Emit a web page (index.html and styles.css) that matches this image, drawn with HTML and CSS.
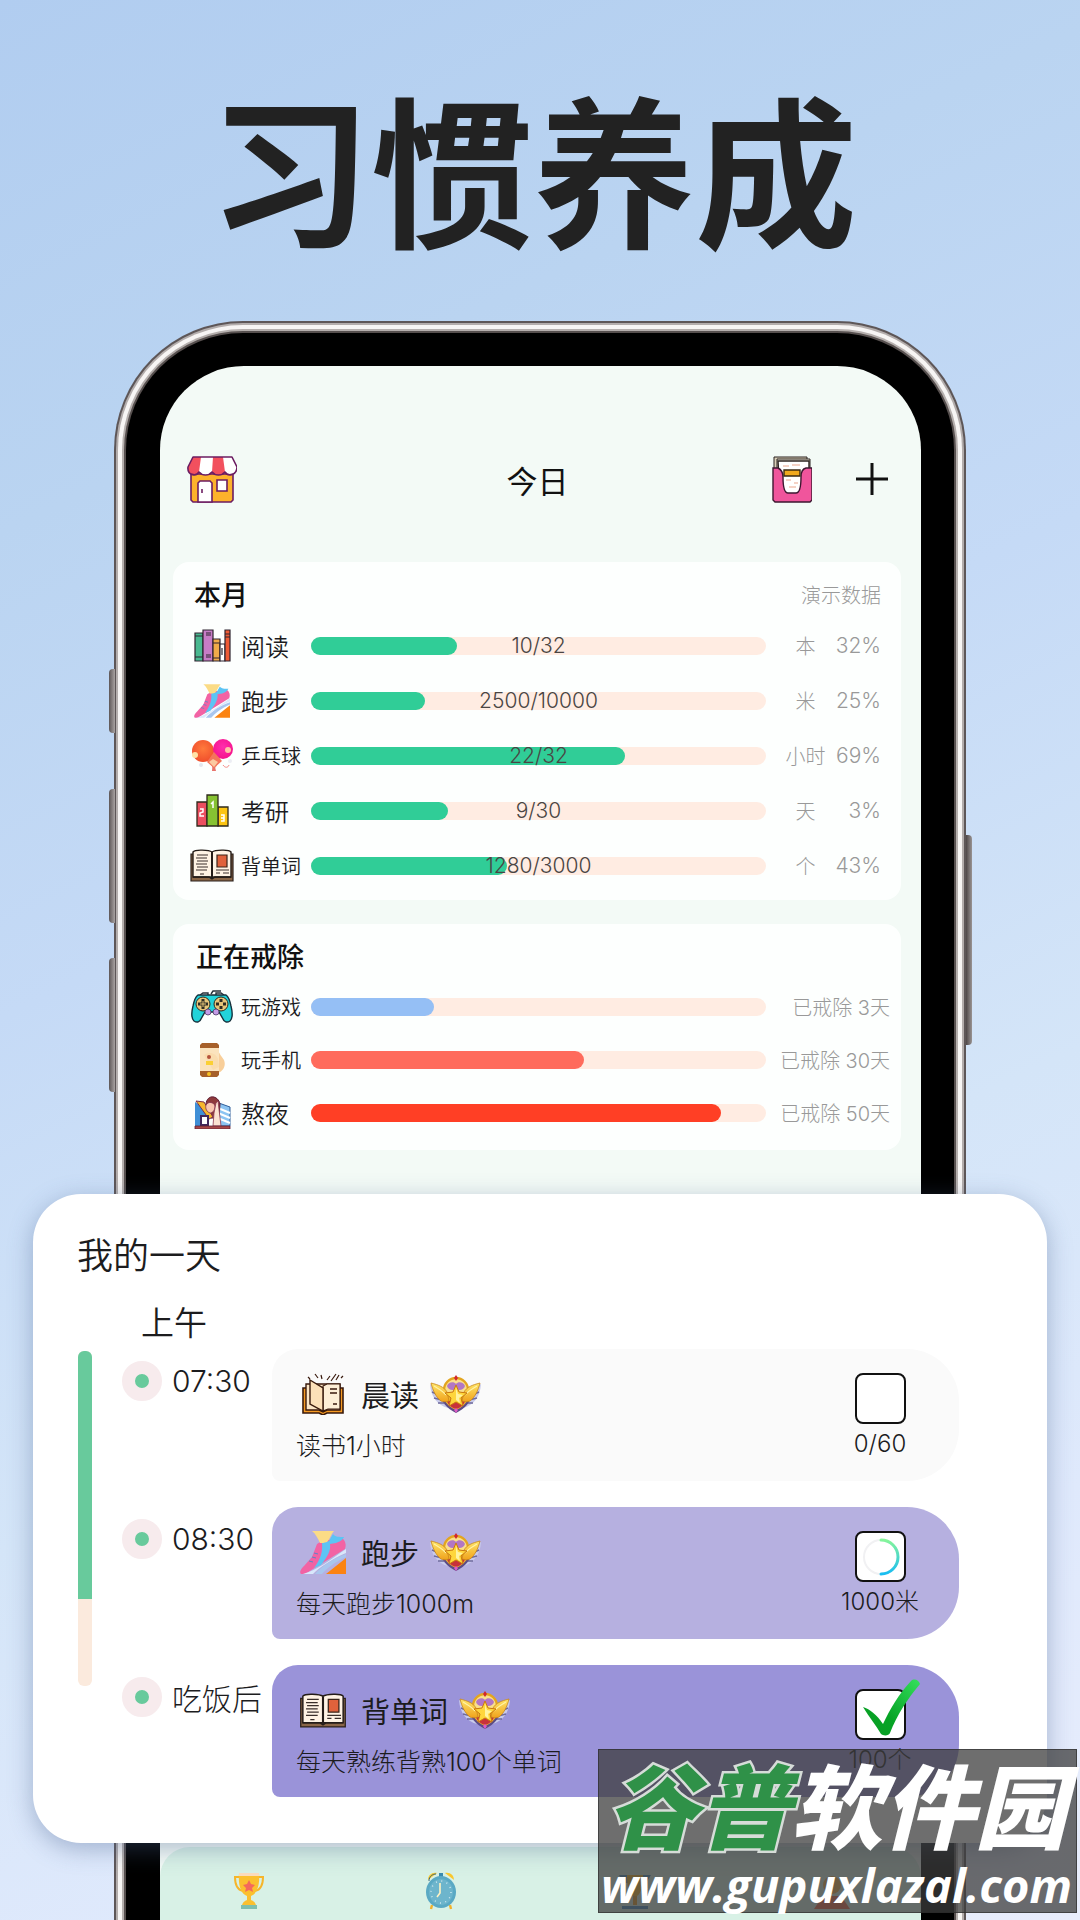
FILE: index.html
```html
<!DOCTYPE html>
<html lang="zh-CN">
<head>
    <meta charset="UTF-8">
    <meta name="viewport" content="width=device-width, initial-scale=1.0">
    <title>习惯养成</title>
    <link rel="stylesheet" href="styles.css">
</head>
<body>
    <!-- Shared icons -->
    <svg class="sprite" aria-hidden="true">
        <defs>
            <linearGradient id="gold" x1="0" y1="0" x2="0" y2="1">
                <stop offset="0" stop-color="#ffe76a"/>
                <stop offset="1" stop-color="#f0a21c"/>
            </linearGradient>
            <linearGradient id="ring" x1="0" y1="0" x2="0" y2="1">
                <stop offset="0" stop-color="#86f59a"/>
                <stop offset="1" stop-color="#18bdf2"/>
            </linearGradient>
            <linearGradient id="tick" x1="1" y1="0" x2="0" y2="1">
                <stop offset="0" stop-color="#35e05e"/>
                <stop offset="0.6" stop-color="#06a425"/>
                <stop offset="1" stop-color="#0b9c26"/>
            </linearGradient>
            <radialGradient id="paddle-orange" cx="0.5" cy="0.4" r="0.6">
                <stop offset="0" stop-color="#ff7a3c"/>
                <stop offset="1" stop-color="#f04f2c"/>
            </radialGradient>
            <radialGradient id="paddle-pink" cx="0.5" cy="0.4" r="0.6">
                <stop offset="0" stop-color="#ff2fae"/>
                <stop offset="1" stop-color="#f5128c"/>
            </radialGradient>
        </defs>

        <symbol id="icon-shoe" viewBox="0 0 46 43">
            <path d="M46 27v16H26z" fill="#fb8312"/>
            <path d="M44 9c2 3 2 6 1 9L5 43H1c-2-2 0-5 3-8l8-9 5-13 8-5 10 2 7-3z" fill="#f263a4"/>
            <path d="M33 3c2 3 6 3 11 3-1 3-5 5-8 6l-6 1c1 6-2 12-9 21l-7 3c6-8 9-16 8-25l7-2z" fill="#5cc4f4"/>
            <path d="M12 0h22c-3 3-4 8-7 11-3 1-5 1-7 1-2-4-4-9-8-12z" fill="#fbdc86"/>
            <path d="M46 18v4C32 28 20 36 13 43H3c14-4 27-14 43-25z" fill="#d9e8fb"/>
            <path d="M46 23v3C35 31 27 37 22 43h-7c8-9 19-16 31-20z" fill="#a9c6ee"/>
            <path d="M14 22l4 1M12 26l4 1M9 30l4 1" stroke="#5a86c8" stroke-width="1"/>
        </symbol>

        <symbol id="icon-book" viewBox="0 0 44 33">
            <path d="M1 5h42v27H1z" fill="#8a6647" stroke="#2b211c" stroke-width="1.2"/>
            <path d="M3 3C5 0 19 1 22 3c3-2 17-3 19 0v25H3z" fill="#fff3e4" stroke="#241c18" stroke-width="1.4"/>
            <path d="M22 3v26" stroke="#241c18" stroke-width="2"/>
            <path d="M3 28h16l3 2 3-2h16" fill="none" stroke="#241c18" stroke-width="1.4"/>
            <path d="M7 6h11M6 9h11M7 12h11M6 15h11M7 18h11M6 21h11M26 21h13M26 24h4M33 24h6M10 25h4" stroke="#3a2f2a" stroke-width="1.2"/>
            <path d="M27 6h10v12H27z" fill="#e0623c" stroke="#3a2419" stroke-width="1.2"/>
        </symbol>

        <symbol id="icon-badge" viewBox="0 0 51 38">
            <path d="M0 9l10 6 8 18C7 30 1 22 0 9zM51 9l-10 6-8 18c11-3 17-11 18-24z" fill="#c9cbea"/>
            <path d="M2 17l9 4M4 23l8 2M8 28l6 0M49 17l-9 4M47 23l-8 2M43 28l-6 0" stroke="#6e6a9c" stroke-width="1.5"/>
            <circle cx="26" cy="15" r="12" fill="#f9df8c" stroke="#e3a51f" stroke-width="2.4"/>
            <path d="M11 18h30c0 9-5 15-15 20-10-5-15-11-15-20z" fill="#5c4b86"/>
            <path d="M13 18h26c0 7-4 13-13 17-9-4-13-10-13-17z" fill="#f2b62c"/>
            <path d="M17 26h18c-1 4-5 7-9 8-4-1-8-4-9-8z" fill="#c8323a"/>
            <path d="M1 8c8 2 13 4 16 9l2 9c-3 1-6 1-8 0C6 22 3 16 1 8zM50 8c-8 2-13 4-16 9l-2 9c3 1 6 1 8 0 5-4 8-10 10-18z" fill="url(#gold)" stroke="#c9861a" stroke-width="0.8"/>
            <path d="M4 11c5 3 9 5 12 9M47 11c-5 3-9 5-12 9" stroke="#fff3a8" stroke-width="1.2" fill="none"/>
            <path d="M17 11c1-4 7-5 9-2 2-3 8-2 9 2-1 4-6 5-9 3-3 2-8 1-9-3z" fill="#b277c4"/>
            <path d="M26 10l3 7 8 1-6 5 2 8-7-4-7 4 2-8-6-5 8-1z" fill="#ffd63c" stroke="#c9780f" stroke-width="1"/>
            <path d="M26 13l2 6 5 1-4 3 1 5-4-3z" fill="#fff3a0"/>
            <path d="M26 0l2 3-2 3-2-3z" fill="#d1262f"/>
            <path d="M26 33l2 2-2 3-2-3z" fill="#e05bc4"/>
        </symbol>
    </svg>

    <h1 class="headline">习惯养成</h1>

    <div class="phone">
        <span class="side-key side-key-mute"></span>
        <span class="side-key side-key-up"></span>
        <span class="side-key side-key-down"></span>
        <span class="side-key side-key-power"></span>

        <main class="screen">
            <header class="topbar">
                <button class="icon-button" type="button" aria-label="商店">
                    <svg width="50" height="47" viewBox="0 0 50 47">
                        <path d="M4 18h42v26l-2 2H6l-2-2z" fill="#fdb22b" stroke="#6c1d62" stroke-width="1.6"/>
                        <path d="M11 46V27l2-2h10l2 2v19z" fill="#fff" stroke="#6c1d62" stroke-width="1.6"/>
                        <path d="M30 24h10v11H30z" fill="#fff" stroke="#6c1d62" stroke-width="1.6"/>
                        <path d="M15 33v4" stroke="#6c1d62" stroke-width="1.6"/>
                        <path d="M6 1h39l5 10c0 8-9 10-12 5-3 4-10 4-13 0-3 4-10 4-13 0C9 21 0 19 1 11z" fill="#fff"/>
                        <path d="M6 1h8l-2 15C8 21 0 19 1 11zM26 1h10l2 15c-3 4-10 4-13 0z" fill="#f2505e"/>
                        <path d="M6 1h39l5 10c0 8-9 10-12 5-3 4-10 4-13 0-3 4-10 4-13 0C9 21 0 19 1 11z" fill="none" stroke="#6c1d62" stroke-width="1.6" stroke-linejoin="round"/>
                    </svg>
                </button>
                <h2 class="topbar-title">今日</h2>
                <div class="topbar-actions">
                    <button class="icon-button" type="button" aria-label="档案">
                        <svg width="40" height="47" viewBox="0 0 40 47">
                            <path d="M2 1h33v12H2z" fill="#d9cfb8" stroke="#2b2320"/>
                            <path d="M5 3h33v12H5z" fill="#efe8d8" stroke="#2b2320"/>
                            <path d="M6 5h31v33H8z" fill="#fff" stroke="#2b2320" stroke-width="1.4"/>
                            <path d="M1 12h5c4 2 5 5 5 9 0 9 1 16 5 16h8c4 0 5-7 5-16 0-4 1-8 5-9h6v32l-2 2H3l-2-2z" fill="#f0559c" stroke="#3d1730" stroke-width="1.4"/>
                            <path d="M12 14h16v6H12z" fill="#f0a91e" stroke="#3a2a12" stroke-width="1.4"/>
                            <path d="M11 10h6M20 9h8M14 24h5M22 27h4M17 31h7" stroke="#e9a58c"/>
                        </svg>
                    </button>
                    <button class="icon-button" type="button" aria-label="添加">
                        <svg width="32" height="32" viewBox="0 0 32 32">
                            <path d="M16 0v32M0 16h32" stroke="#111" stroke-width="3"/>
                        </svg>
                    </button>
                </div>
            </header>

            <section class="panel">
                <div class="panel-head">
                    <h3>本月</h3>
                    <span class="panel-note">演示数据</span>
                </div>
                <ul class="habits">
                    <li class="habit">
                        <svg class="habit-icon" width="37" height="33" viewBox="0 0 37 33">
                            <g stroke="#2f2530" stroke-width="1.2">
                                <path d="M1 4h8v28H1z" fill="#49b890"/>
                                <path d="M9 1h10v31H9z" fill="#c77cc6"/>
                                <path d="M19 10h7v22h-7z" fill="#f0ab4a"/>
                                <path d="M26 15h5v17h-5z" fill="#fff"/>
                                <path d="M31 1h5v31h-5z" fill="#ee5a35"/>
                                <path d="M1 7h8M1 28h8M12 4h5M12 6h5M12 26h5M12 28h5M19 14h7M19 29h7M31 5h5M31 8h5M28 19v7"/>
                            </g>
                        </svg>
                        <span class="habit-name">阅读</span>
                        <div class="bar"><div class="bar-fill" style="width: 32%"></div><span class="bar-text">10/32</span></div>
                        <span class="habit-unit">本</span>
                        <span class="habit-percent">32%</span>
                    </li>
                    <li class="habit">
                        <svg class="habit-icon" width="36" height="34"><use href="#icon-shoe"/></svg>
                        <span class="habit-name">跑步</span>
                        <div class="bar"><div class="bar-fill" style="width: 25%"></div><span class="bar-text">2500/10000</span></div>
                        <span class="habit-unit">米</span>
                        <span class="habit-percent">25%</span>
                    </li>
                    <li class="habit">
                        <svg class="habit-icon" width="41" height="33" viewBox="0 0 41 33">
                            <path d="M14 20l8 10 2-2 5-10-8-2z" fill="#f7b48c"/>
                            <path d="M21 20l3 12h-4z" fill="#e8746c"/>
                            <circle cx="11" cy="12" r="11" fill="url(#paddle-orange)"/>
                            <circle cx="31" cy="10" r="10" fill="url(#paddle-pink)"/>
                            <path d="M15 23l7-10 8 9-8 7z" fill="#f4745a"/>
                            <path d="M17 23l4-3 5 3-4 5z" fill="#fbc9a0"/>
                            <circle cx="3" cy="16" r="3" fill="#ffe2a6"/>
                            <circle cx="36" cy="11" r="3" fill="#ffc2a6"/>
                            <circle cx="9" cy="26" r="2" fill="#e4e7ee"/>
                            <path d="M31 26c2 3 5 3 6 0" stroke="#f58a86" fill="none"/>
                            <circle cx="38" cy="22" r="2" fill="#eceef4"/>
                        </svg>
                        <span class="habit-name habit-name-small">乒乓球</span>
                        <div class="bar"><div class="bar-fill" style="width: 69%"></div><span class="bar-text">22/32</span></div>
                        <span class="habit-unit">小时</span>
                        <span class="habit-percent">69%</span>
                    </li>
                    <li class="habit">
                        <svg class="habit-icon" width="33" height="33" viewBox="0 0 33 33">
                            <g stroke="#2e2a1c" stroke-width="1.3">
                                <path d="M1 8h10v24H1z" fill="#ec4f60"/>
                                <path d="M22 13h10v19H22z" fill="#fbc412"/>
                                <path d="M11 1h11v31H11z" fill="#86c232"/>
                            </g>
                            <path d="M4 15h3v3l-3 1v3h4M15 10l2-2v6M25 21h3v6h-3M25 24h3" fill="none" stroke="#fff" stroke-width="1.5"/>
                        </svg>
                        <span class="habit-name">考研</span>
                        <div class="bar"><div class="bar-fill" style="width: 30%"></div><span class="bar-text">9/30</span></div>
                        <span class="habit-unit">天</span>
                        <span class="habit-percent">3%</span>
                    </li>
                    <li class="habit">
                        <svg class="habit-icon" width="44" height="33"><use href="#icon-book"/></svg>
                        <span class="habit-name habit-name-small">背单词</span>
                        <div class="bar"><div class="bar-fill" style="width: 43%"></div><span class="bar-text">1280/3000</span></div>
                        <span class="habit-unit">个</span>
                        <span class="habit-percent">43%</span>
                    </li>
                </ul>
            </section>

            <section class="panel panel-quit">
                <div class="panel-head">
                    <h3>正在戒除</h3>
                </div>
                <ul class="habits">
                    <li class="habit">
                        <svg class="habit-icon" width="42" height="33" viewBox="0 0 42 33">
                            <path d="M9 5l3-2h5v3M33 5l-3-2h-5v3M20 4l2-3h8" fill="none" stroke="#26303a" stroke-width="1.4"/>
                            <path d="M7 5h28c3 2 4 6 5 11 2 8 2 12-1 15-3 2-6 1-7-2l-4-7H14l-4 7c-1 3-4 4-7 2-3-3-3-7-1-15C3 11 4 7 7 5z" fill="#22d3da" stroke="#17313c" stroke-width="1.4"/>
                            <circle cx="12" cy="14" r="7" fill="#e7c478" stroke="#2d2a22"/>
                            <circle cx="30" cy="14" r="7" fill="#e7c478" stroke="#2d2a22"/>
                            <path d="M12 9v10M7 14h10" stroke="#2d2a22" stroke-width="3"/>
                            <path d="M12 11v6M9 14h6" stroke="#e7c478"/>
                            <path d="M30 9v10M25 14h10" stroke="#2d2a22" stroke-width="3" stroke-dasharray="3 4"/>
                            <circle cx="17" cy="22" r="3" fill="#c39be6" stroke="#4b3a66" stroke-width="0.8"/>
                            <circle cx="25" cy="22" r="3" fill="#c39be6" stroke="#4b3a66" stroke-width="0.8"/>
                        </svg>
                        <span class="habit-name habit-name-small">玩游戏</span>
                        <div class="bar"><div class="bar-fill bar-fill-blue" style="width: 27%"></div></div>
                        <span class="habit-days">已戒除 3天</span>
                    </li>
                    <li class="habit">
                        <svg class="habit-icon" width="26" height="34" viewBox="0 0 26 34">
                            <path d="M19 8c2 3 3 5 6 9 2 5 0 11-6 13z" fill="#f8cf9a"/>
                            <path d="M1 2l2-2h15l2 2v30l-2 2H3l-2-2z" fill="#a6602a"/>
                            <path d="M1 5h19v23H1z" fill="#fbe3bd"/>
                            <path d="M5 12c5-4 12-2 14 4l1 8-6 3z" fill="#fadcae"/>
                            <path d="M7 18h7v4H7z" fill="#fbd034"/>
                            <circle cx="10" cy="14" r="2" fill="#b5533a"/>
                            <circle cx="10" cy="31" r="2" fill="#f6c223"/>
                        </svg>
                        <span class="habit-name habit-name-small">玩手机</span>
                        <div class="bar"><div class="bar-fill bar-fill-coral" style="width: 60%"></div></div>
                        <span class="habit-days">已戒除 30天</span>
                    </li>
                    <li class="habit">
                        <svg class="habit-icon" width="37" height="33" viewBox="0 0 37 33">
                            <path d="M1 6l12 8v16H1z" fill="#3f8fd6"/>
                            <path d="M22 6l14 5v19H22z" fill="#8cc4f2" stroke="#2f5f9a"/>
                            <path d="M24 12l12 5M24 17l12 5M24 22l12 5" stroke="#fff" stroke-width="2"/>
                            <path d="M12 8c1-10 12-9 14 0l-1 14h-8z" fill="#8e3a3c" stroke="#5d1f36"/>
                            <path d="M2 5l8 1 9 15-4 2z" fill="#f6b82c" stroke="#7c2f4a"/>
                            <path d="M12 9c2-4 8-3 9 1 0 5-3 7-5 7-3-1-5-4-4-8z" fill="#f9c6b0" stroke="#7c2f4a" stroke-width="0.8"/>
                            <path d="M24 5l3 25h-8l1-13 2-10z" fill="#fbe2d2" stroke="#8e3a52" stroke-width="0.8"/>
                            <path d="M7 20h7v9H7z" fill="#fff" stroke="#40275c" stroke-width="2"/>
                            <path d="M1 30h35v3H1z" fill="#a94848" stroke="#5d1f36" stroke-width="0.8"/>
                        </svg>
                        <span class="habit-name">熬夜</span>
                        <div class="bar"><div class="bar-fill bar-fill-red" style="width: 90%"></div></div>
                        <span class="habit-days">已戒除 50天</span>
                    </li>
                </ul>
            </section>

            <section class="day">
                <h2 class="day-title">我的一天</h2>
                <h3 class="day-part">上午</h3>
                <div class="timeline">
                    <div class="track"><div class="track-fill" style="height: 74%"></div></div>
                    <ol class="tasks">
                        <li class="task">
                            <div class="task-time"><span class="dot"></span>07:30</div>
                            <div class="task-card">
                                <div class="task-info">
                                    <div class="task-head">
                                        <svg class="task-icon" width="42" height="42" viewBox="0 0 42 42">
                                            <path d="M1 15h40v25H25l-4 2-4-2H1z" fill="#f59a23" stroke="#38190c" stroke-width="1.6"/>
                                            <path d="M4 11h34v26H25l-4 2-4-2H4z" fill="#fce6c6" stroke="#38190c" stroke-width="1.4"/>
                                            <path d="M21 13l4-2h13v25H26l-5 2z" fill="#fdeed6" stroke="#38190c" stroke-width="1.2"/>
                                            <path d="M8 7l13 8v23L8 31z" fill="#fce0b8" stroke="#38190c" stroke-width="1.4"/>
                                            <path d="M28 16h7M28 20h7M31 31h4" stroke="#38190c" stroke-width="1.4"/>
                                            <path d="M6 4l2 2M13 1l3 4M19 2l1 4M25 7l3-4M29 8l5-7M34 7l3-5M39 5l2-2" stroke="#38190c" stroke-width="1.2"/>
                                        </svg>
                                        <h4>晨读</h4>
                                        <svg class="task-badge" width="51" height="38"><use href="#icon-badge"/></svg>
                                    </div>
                                    <p class="task-note">读书1小时</p>
                                </div>
                                <label class="task-check">
                                    <span class="check-box"><input type="checkbox" class="check-input"></span>
                                    0/60
                                </label>
                            </div>
                        </li>
                        <li class="task">
                            <div class="task-time"><span class="dot"></span>08:30</div>
                            <div class="task-card task-card-active">
                                <div class="task-info">
                                    <div class="task-head">
                                        <svg class="task-icon" width="46" height="43"><use href="#icon-shoe"/></svg>
                                        <h4>跑步</h4>
                                        <svg class="task-badge" width="51" height="38"><use href="#icon-badge"/></svg>
                                    </div>
                                    <p class="task-note">每天跑步1000m</p>
                                </div>
                                <label class="task-check">
                                    <span class="check-box">
                                        <input type="checkbox" class="check-input">
                                        <svg class="check-ring" width="38" height="38" viewBox="0 0 38 38">
                                            <circle cx="19" cy="19" r="17" fill="none" stroke="#f1f1f3" stroke-width="2"/>
                                            <path d="M19 2a17 17 0 0 1 0 34" fill="none" stroke="url(#ring)" stroke-width="3" stroke-linecap="round"/>
                                        </svg>
                                    </span>
                                    1000米
                                </label>
                            </div>
                        </li>
                        <li class="task">
                            <div class="task-time"><span class="dot"></span>吃饭后</div>
                            <div class="task-card task-card-done">
                                <div class="task-info">
                                    <div class="task-head">
                                        <svg class="task-icon" width="46" height="35"><use href="#icon-book"/></svg>
                                        <h4>背单词</h4>
                                        <svg class="task-badge" width="51" height="38"><use href="#icon-badge"/></svg>
                                    </div>
                                    <p class="task-note">每天熟练背熟100个单词</p>
                                </div>
                                <label class="task-check">
                                    <span class="check-box">
                                        <input type="checkbox" class="check-input" checked>
                                        <svg class="check-tick" width="57" height="57" viewBox="0 0 57 57">
                                            <path d="M0 28c7 2 14 8 20 17C27 30 36 15 48 2c3-3 8-1 9 3C45 19 34 36 27 54c-1 3-7 3-9 1C13 46 6 38 0 28z" fill="url(#tick)"/>
                                        </svg>
                                    </span>
                                    100个
                                </label>
                            </div>
                        </li>
                    </ol>
                </div>
            </section>

            <nav class="tabs">
                <a href="#goals" aria-label="目标">
                    <svg width="30" height="38" viewBox="0 0 30 38">
                        <path d="M6 5H1c0 8 3 13 8 14M24 5h5c0 8-3 13-8 14" fill="none" stroke="#f6b52a" stroke-width="2"/>
                        <path d="M5 2h20c1 11-2 20-8 22v6h-4v-6C7 22 4 13 5 2z" fill="#fbc02f"/>
                        <path d="M5 1h20v3H5z" fill="#fbdcbe"/>
                        <path d="M15 8l2 4 4 1-3 3 1 4-4-2-4 2 1-4-3-3 4-1z" fill="#f4695c"/>
                        <path d="M8 33c1-3 3-5 7-5s6 2 7 5z" fill="#fbc02f"/>
                        <path d="M7 33h16v4H7z" fill="#7fbfae"/>
                    </svg>
                </a>
                <a href="#clock" aria-label="闹钟">
                    <svg width="30" height="38" viewBox="0 0 30 38">
                        <path d="M2 8c0-5 4-8 9-7zM28 8c0-5-4-8-9-7z" fill="#f9c82e"/>
                        <path d="M3 9c0-5 4-7 7-7" fill="none" stroke="#39667c" stroke-width="1"/>
                        <path d="M13 1h4v5h-4z" fill="#3a8bb0"/>
                        <path d="M6 33l-1 4M24 33l1 4" stroke="#f2b22a" stroke-width="2.4"/>
                        <ellipse cx="15" cy="20" rx="15" ry="16" fill="#5aa9c4"/>
                        <ellipse cx="15" cy="20" rx="12" ry="13" fill="#6db5cc"/>
                        <ellipse cx="15" cy="20" rx="10" ry="11" fill="none" stroke="#d4ecf3" stroke-width="1.4" stroke-dasharray="1 4.5"/>
                        <path d="M14 11v10l-3 4" fill="none" stroke="#fff3c4" stroke-width="1.6"/>
                    </svg>
                </a>
                <a href="#rank" aria-label="排行">
                    <svg width="34" height="38" viewBox="0 0 34 38">
                        <path d="M1 3h32l-5 8H6z" fill="#4a8fc4"/>
                        <path d="M9 3h16c0 12-2 20-8 22-6-2-8-10-8-22z" fill="#f6b52a"/>
                        <path d="M15 24h4v9h-4z" fill="#e29a2a"/>
                        <path d="M4 34h26v3H4z" fill="#4a8fc4"/>
                    </svg>
                </a>
                <a href="#mine" aria-label="我的">
                    <svg width="36" height="38" viewBox="0 0 36 38">
                        <circle cx="18" cy="13" r="9" fill="#f8b04c"/>
                        <path d="M9 24h18l9 13H0z" fill="#ee6a4a"/>
                    </svg>
                </a>
            </nav>
        </main>
    </div>

    <aside class="site-mark">
        <div class="site-name"><span class="site-name-green">谷普</span>软件园</div>
        <div class="site-url">www.gupuxlazal.com</div>
    </aside>
</body>
</html>
```
FILE: styles.css
```css
* {
    margin: 0;
    padding: 0;
    box-sizing: border-box;
}

body {
    position: relative;
    min-height: 100vh;
    display: flex;
    flex-direction: column;
    overflow: hidden;
    font-family: Inter, "Noto Sans CJK SC", sans-serif;
    font-weight: 300;
    color: #1c1c1e;
    background: linear-gradient(155deg, #b1cdf0 0%, #bad4f1 22%, #c5daf6 42%, #d4e5f8 64%, #dfe9fc 82%, #e8edfc 100%);
}

ul,
ol {
    list-style: none;
}

svg {
    display: block;
}

.sprite {
    position: absolute;
    width: 0;
    height: 0;
}

.headline {
    padding: 96px 14px 75px 0;
    font-size: 162px;
    line-height: 162px;
    font-weight: 700;
    text-align: center;
    color: #222;
}

/* Phone */
.phone {
    position: relative;
    width: calc(100% - 252px);
    margin: 0 auto;
    padding: 33px 33px 0 34px;
    flex: 1;
    display: flex;
    border-radius: 117px 117px 0 0;
    background: #000;
    box-shadow: 0 0 0 2px #57504f, 0 0 0 4px #b5afad, 0 0 0 8px #f7f5f4, 0 0 0 10px #b3adac, 0 0 0 12px #5d5657;
}

.side-key {
    position: absolute;
    left: -17px;
    width: 6px;
    border-radius: 4px 0 0 4px;
    background: linear-gradient(90deg, #5d5657, #a8a2a1);
}

.side-key-mute {
    top: 336px;
    height: 64px;
}

.side-key-up {
    top: 456px;
    height: 134px;
}

.side-key-down {
    top: 625px;
    height: 134px;
}

.side-key-power {
    top: 502px;
    left: auto;
    right: -18px;
    height: 210px;
    border-radius: 0 4px 4px 0;
    background: linear-gradient(90deg, #4d4647, #9a9493);
}

.screen {
    flex: 1;
    min-width: 0;
    display: flex;
    flex-direction: column;
    border-radius: 84px 84px 0 0;
    background: #f3faf6;
}

.topbar {
    height: 196px;
    padding: 30px 33px 0 27px;
    display: grid;
    grid-template-columns: 1fr auto 1fr;
    align-items: center;
}

.topbar-title {
    font-size: 31px;
    font-weight: 400;
    color: #111;
}

.topbar-actions {
    display: flex;
    align-items: center;
    justify-content: flex-end;
    gap: 44px;
}

.icon-button {
    justify-self: start;
    border: none;
    background: none;
    cursor: pointer;
}

/* Progress panels */
.panel {
    margin: 0 20px 24px 13px;
    padding: 14px 20px 7px 17px;
    border-radius: 16px;
    background: #fdfffe;
}

.panel-head {
    display: flex;
    align-items: center;
    justify-content: space-between;
    margin-bottom: 2px;
    line-height: 40px;
}

.panel-head h3 {
    padding-left: 4px;
    font-size: 27px;
    font-weight: 500;
    color: #111;
}

.panel-note {
    font-size: 20px;
    color: #999;
}

.habit {
    display: grid;
    grid-template-columns: 44px 77px 1fr 79px 36px;
    align-items: center;
    height: 55px;
}

.habit-icon {
    justify-self: center;
}

.habit-name {
    padding-left: 7px;
    font-size: 24px;
    font-weight: 350;
    white-space: nowrap;
}

.habit-name-small {
    font-size: 20px;
}

.bar {
    position: relative;
    height: 18px;
    border-radius: 9px;
    background: #ffece2;
}

.bar-fill {
    height: 100%;
    border-radius: 9px;
    background: #30cd97;
}

.bar-fill-blue {
    background: #95bff5;
}

.bar-fill-coral {
    background: #ff6b5c;
}

.bar-fill-red {
    background: #ff3f25;
}

.bar-text {
    position: absolute;
    inset: -4px 0;
    font-size: 21px;
    line-height: 26px;
    text-align: center;
    color: #4a4543;
}

.habit-unit,
.habit-percent,
.habit-days {
    font-size: 20px;
    color: #999;
    white-space: nowrap;
}

.habit-unit {
    text-align: center;
}

.habit-percent {
    justify-self: end;
    font-size: 21px;
}

.panel-quit {
    margin-bottom: 44px;
    padding: 14px 11px 11px 17px;
}

.panel-quit .panel-head h3 {
    padding-left: 6px;
}

.panel-quit .habit {
    grid-template-columns: 44px 77px 1fr 124px;
    height: 53px;
}

.habit-days {
    justify-self: end;
}

/* My day */
.day {
    position: relative;
    z-index: 1;
    margin: 0 -126px 0 -127px;
    padding: 38px 88px 46px 44px;
    border-radius: 48px;
    background: #fff;
    box-shadow: 0 6px 24px rgba(70, 95, 140, 0.4);
}

.day-title {
    font-size: 36px;
    line-height: 48px;
    font-weight: 350;
}

.day-part {
    margin-top: 21px;
    padding-left: 64px;
    font-size: 33px;
    line-height: 44px;
    font-weight: 350;
}

.timeline {
    display: flex;
    gap: 30px;
    margin-top: 4px;
    padding-left: 1px;
}

.track {
    width: 14px;
    margin: 2px 0 111px;
    border-radius: 6px;
    overflow: hidden;
    background: #fbeadd;
}

.track-fill {
    background: #68ca9c;
}

.tasks {
    flex: 1;
    display: flex;
    flex-direction: column;
    gap: 26px;
}

.task {
    display: grid;
    grid-template-columns: 150px 1fr;
}

.task-time {
    display: flex;
    align-items: center;
    gap: 10px;
    height: 40px;
    margin-top: 12px;
    font-size: 30px;
    white-space: nowrap;
}

.dot {
    flex: none;
    width: 40px;
    height: 40px;
    border: 13px solid #f7ebed;
    border-radius: 50%;
    background: #68ca9c;
}

.task-card {
    display: flex;
    justify-content: space-between;
    height: 132px;
    padding: 24px;
    border-radius: 26px 52px 52px 8px;
    background: #fafafa;
}

.task-card-active {
    background: #b6b0e0;
}

.task-card-done {
    background: #9a93d9;
}

.task-head {
    display: flex;
    align-items: center;
    height: 42px;
}

.task-icon {
    width: 54px;
}

.task-head h4 {
    margin: 0 11px;
    font-size: 29px;
    font-weight: 400;
}

.task-note {
    margin-top: 15px;
    font-size: 25px;
    line-height: 32px;
}

.task-check {
    width: 110px;
    display: flex;
    flex-direction: column;
    align-items: center;
    gap: 4px;
    font-size: 24px;
    line-height: 32px;
    cursor: pointer;
}

.check-box {
    position: relative;
}

.check-input {
    display: block;
    width: 51px;
    height: 51px;
    appearance: none;
    border: 2px solid #111;
    border-radius: 8px;
    background: #fff;
}

.check-ring {
    position: absolute;
    top: 7px;
    left: 7px;
}

.check-tick {
    position: absolute;
    top: -10px;
    left: 8px;
}

/* Bottom tabs */
.tabs {
    flex: 1;
    display: flex;
    gap: 162px;
    margin-top: 4px;
    padding: 25px 0 9px 74px;
    border-radius: 30px 30px 0 0;
    background: #d8f1e6;
}

/* Site banner over the lower corner */
.site-mark {
    position: absolute;
    right: 3px;
    bottom: 7px;
    z-index: 2;
    padding: 10px 4px 0 2px;
    border: 1px solid rgba(40, 40, 40, 0.6);
    background: rgba(60, 60, 60, 0.74);
    color: #fff;
    text-align: center;
    white-space: nowrap;
}

.site-name {
    font-size: 92px;
    line-height: 98px;
    font-weight: 900;
    font-style: italic;
}

.site-name-green {
    color: #2f9148;
    -webkit-text-stroke: 5px #d6dcd8;
    paint-order: stroke fill;
}

.site-url {
    font-family: "Open Sans", sans-serif;
    font-size: 47px;
    line-height: 54px;
    font-weight: 700;
    font-style: italic;
}
```
